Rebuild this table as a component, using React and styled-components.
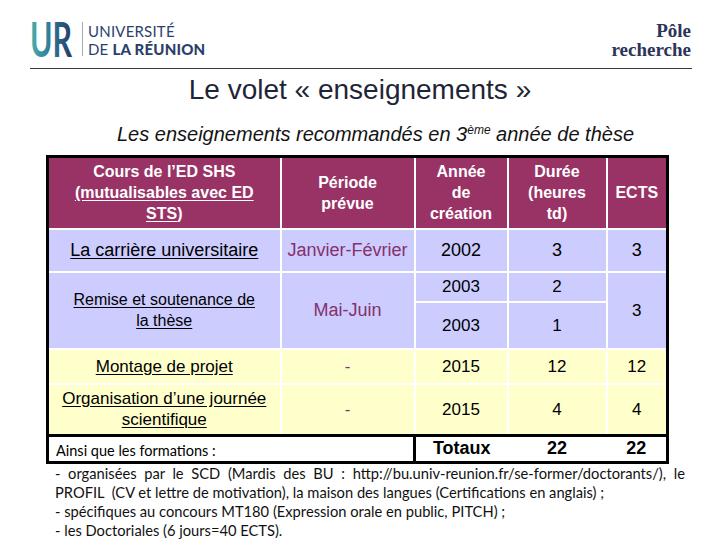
import React from 'react';
import styled, { createGlobalStyle } from 'styled-components';

const GlobalStyle = createGlobalStyle`
  html, body { margin: 0; padding: 0; background: #fff; }
  body { font-family: "Liberation Sans", Arial, sans-serif; }
`;

const Page = styled.div`
  width: 720px;
  height: 540px;
  overflow: hidden;
  background: #fff;
`;

const Header = styled.header`
  box-sizing: border-box;
  height: 69px;
  margin: 0 28px 0 30px;
  padding-top: 19px;
  border-bottom: 1px solid #3a3a3a;
  display: flex;
  justify-content: space-between;
  align-items: flex-start;
`;

const Brand = styled.div`
  display: flex;
  align-items: center;
`;

const Mark = styled.svg`
  display: block;
  overflow: visible;
`;

const Divider = styled.span`
  width: 1px;
  height: 34px;
  background: #a3acb6;
  margin: 0 5px 0 8px;
`;

const Wordmark = styled.div`
  font-family: Lato, "Open Sans", sans-serif;
  color: #2b3f6c;
  line-height: 18px;
  padding-top: 1px;
`;

const WordLine = styled.div`
  font-size: 15px;
  font-weight: 400;
  letter-spacing: 0.2px;
`;

const Strong = styled.span`
  font-weight: 900;
`;

const Pole = styled.div`
  font-family: "Liberation Serif", "DejaVu Serif", serif;
  font-weight: 700;
  font-size: 19px;
  line-height: 19px;
  color: #2c3459;
  text-align: right;
  padding: 2px 1px 0 0;
`;

const Title = styled.h1`
  margin: 5px 0 0;
  font-weight: 400;
  font-size: 28px;
  line-height: 32px;
  color: #1f2536;
  text-align: center;
`;

const Subtitle = styled.h2`
  margin: 16px 0 0 117px;
  font-style: italic;
  font-weight: 400;
  font-size: 20px;
  line-height: 24px;
  color: #141414;
`;

const Sup = styled.sup`
  font-size: 12px;
  line-height: 0;
  vertical-align: 7px;
`;

const Table = styled.table`
  margin: 9px 0 0 46px;
  width: 620px;
  table-layout: fixed;
  border-collapse: collapse;
  border: 3px solid #000;
`;

const Row = styled.tr`
  height: ${(p) => p.$h}px;
`;

const HeadCell = styled.th`
  background: #993366;
  color: #fff;
  font-weight: 700;
  font-size: 16px;
  line-height: 21px;
  border: 2px solid #fff;
  padding: 0 4px;
  text-align: center;
  vertical-align: middle;
`;

const Cell = styled.td`
  background: ${(p) => p.$bg};
  color: ${(p) => p.$tone || '#000'};
  font-size: ${(p) => p.$size || 17}px;
  line-height: 21px;
  border: 2px solid #fff;
  padding: 0 4px;
  text-align: center;
  vertical-align: middle;
`;

const Link = styled.span`
  text-decoration: underline;
  text-underline-offset: 2px;
`;

const NoteCell = styled.td`
  background: #fff;
  border-top: 3px solid #000;
  border-right: 3px solid #000;
  text-align: left;
  vertical-align: bottom;
  font-family: Lato, "Open Sans", sans-serif;
  font-size: 14.5px;
  line-height: 18px;
  padding: 0 0 1px 7px;
  color: #000;
`;

const TotalCell = styled.td`
  background: #fff;
  border-top: 3px solid #000;
  font-weight: 700;
  font-size: 18px;
  line-height: 20px;
  text-align: center;
  vertical-align: middle;
  padding: 0 0 3px;
  color: #000;
`;

const Notes = styled.div`
  margin: 0 0 0 55px;
  width: 630px;
  font-family: Lato, "Open Sans", sans-serif;
  font-size: 14.7px;
  line-height: 19px;
  color: #111;
`;

const NoteLine = styled.div`
  white-space: ${(p) => (p.$justify ? 'normal' : 'pre')};
  text-align: ${(p) => (p.$justify ? 'justify' : 'left')};
  text-align-last: ${(p) => (p.$justify ? 'justify' : 'auto')};
`;

const LAV = '#ccccff';
const YEL = '#ffffcc';
const PLUM = '#86306c';

export default function App() {
  return (
    <Page>
      <GlobalStyle />
      <Header>
        <Brand>
          <Mark width="44" height="40" viewBox="0 0 44 40">
            <defs>
              <linearGradient id="urg" x1="0" y1="0" x2="1" y2="0">
                <stop offset="0" stopColor="#4bb0ad" />
                <stop offset="0.45" stopColor="#2f7f9a" />
                <stop offset="1" stopColor="#243b69" />
              </linearGradient>
            </defs>
            <text
              x="0"
              y="38"
              fontFamily="Lato, sans-serif"
              fontWeight="700"
              fontSize="48"
              fill="url(#urg)"
              textLength="42"
              lengthAdjust="spacingAndGlyphs"
            >
              UR
            </text>
          </Mark>
          <Divider />
          <Wordmark>
            <WordLine>UNIVERSITÉ</WordLine>
            <WordLine>
              DE <Strong>LA RÉUNION</Strong>
            </WordLine>
          </Wordmark>
        </Brand>
        <Pole>
          Pôle
          <br />
          recherche
        </Pole>
      </Header>

      <Title>Le volet « enseignements »</Title>
      <Subtitle>
        Les enseignements recommandés en 3<Sup>ème</Sup> année de thèse
      </Subtitle>

      <Table>
        <colgroup>
          <col style={{ width: 233 }} />
          <col style={{ width: 134 }} />
          <col style={{ width: 93 }} />
          <col style={{ width: 99 }} />
          <col style={{ width: 61 }} />
        </colgroup>
        <thead>
          <Row $h={72}>
            <HeadCell>
              Cours de l’ED SHS
              <br />
              <Link>(mutualisables avec ED</Link>
              <br />
              <Link>STS</Link>)
            </HeadCell>
            <HeadCell>
              Période
              <br />
              prévue
            </HeadCell>
            <HeadCell>
              Année
              <br />
              de
              <br />
              création
            </HeadCell>
            <HeadCell>
              Durée
              <br />
              (heures
              <br />
              td)
            </HeadCell>
            <HeadCell>ECTS</HeadCell>
          </Row>
        </thead>
        <tbody>
          <Row $h={43}>
            <Cell $bg={LAV} $size={18}>
              <Link>La carrière universitaire</Link>
            </Cell>
            <Cell $bg={LAV} $tone={PLUM} $size={18}>
              Janvier-Février
            </Cell>
            <Cell $bg={LAV} $size={18}>2002</Cell>
            <Cell $bg={LAV} $size={18}>3</Cell>
            <Cell $bg={LAV} $size={18}>3</Cell>
          </Row>
          <Row $h={30}>
            <Cell $bg={LAV} $size={16} rowSpan={2}>
              <Link>Remise et soutenance de</Link>
              <br />
              <Link>la thèse</Link>
            </Cell>
            <Cell $bg={LAV} $tone={PLUM} $size={18} rowSpan={2}>
              Mai-Juin
            </Cell>
            <Cell $bg={LAV}>2003</Cell>
            <Cell $bg={LAV}>2</Cell>
            <Cell $bg={LAV} rowSpan={2}>
              3
            </Cell>
          </Row>
          <Row $h={47}>
            <Cell $bg={LAV}>2003</Cell>
            <Cell $bg={LAV}>1</Cell>
          </Row>
          <Row $h={35}>
            <Cell $bg={YEL}>
              <Link>Montage de projet</Link>
            </Cell>
            <Cell $bg={YEL} $tone={PLUM}>
              -
            </Cell>
            <Cell $bg={YEL}>2015</Cell>
            <Cell $bg={YEL}>12</Cell>
            <Cell $bg={YEL}>12</Cell>
          </Row>
          <Row $h={52}>
            <Cell $bg={YEL}>
              <Link>Organisation d’une journée</Link>
              <br />
              <Link>scientifique</Link>
            </Cell>
            <Cell $bg={YEL} $tone={PLUM}>
              -
            </Cell>
            <Cell $bg={YEL}>2015</Cell>
            <Cell $bg={YEL}>4</Cell>
            <Cell $bg={YEL}>4</Cell>
          </Row>
          <Row $h={27}>
            <NoteCell colSpan={2}>Ainsi que les formations :</NoteCell>
            <TotalCell>Totaux</TotalCell>
            <TotalCell>22</TotalCell>
            <TotalCell>22</TotalCell>
          </Row>
        </tbody>
      </Table>

      <Notes>
        <NoteLine $justify>
          - organisées par le SCD (Mardis des BU : http://bu.univ-reunion.fr/se-former/doctorants/), le
        </NoteLine>
        <NoteLine>
          PROFIL  (CV et lettre de motivation), la maison des langues (Certifications en anglais) ;
        </NoteLine>
        <NoteLine>- spécifiques au concours MT180 (Expression orale en public, PITCH) ;</NoteLine>
        <NoteLine>- les Doctoriales (6 jours=40 ECTS).</NoteLine>
      </Notes>
    </Page>
  );
}
